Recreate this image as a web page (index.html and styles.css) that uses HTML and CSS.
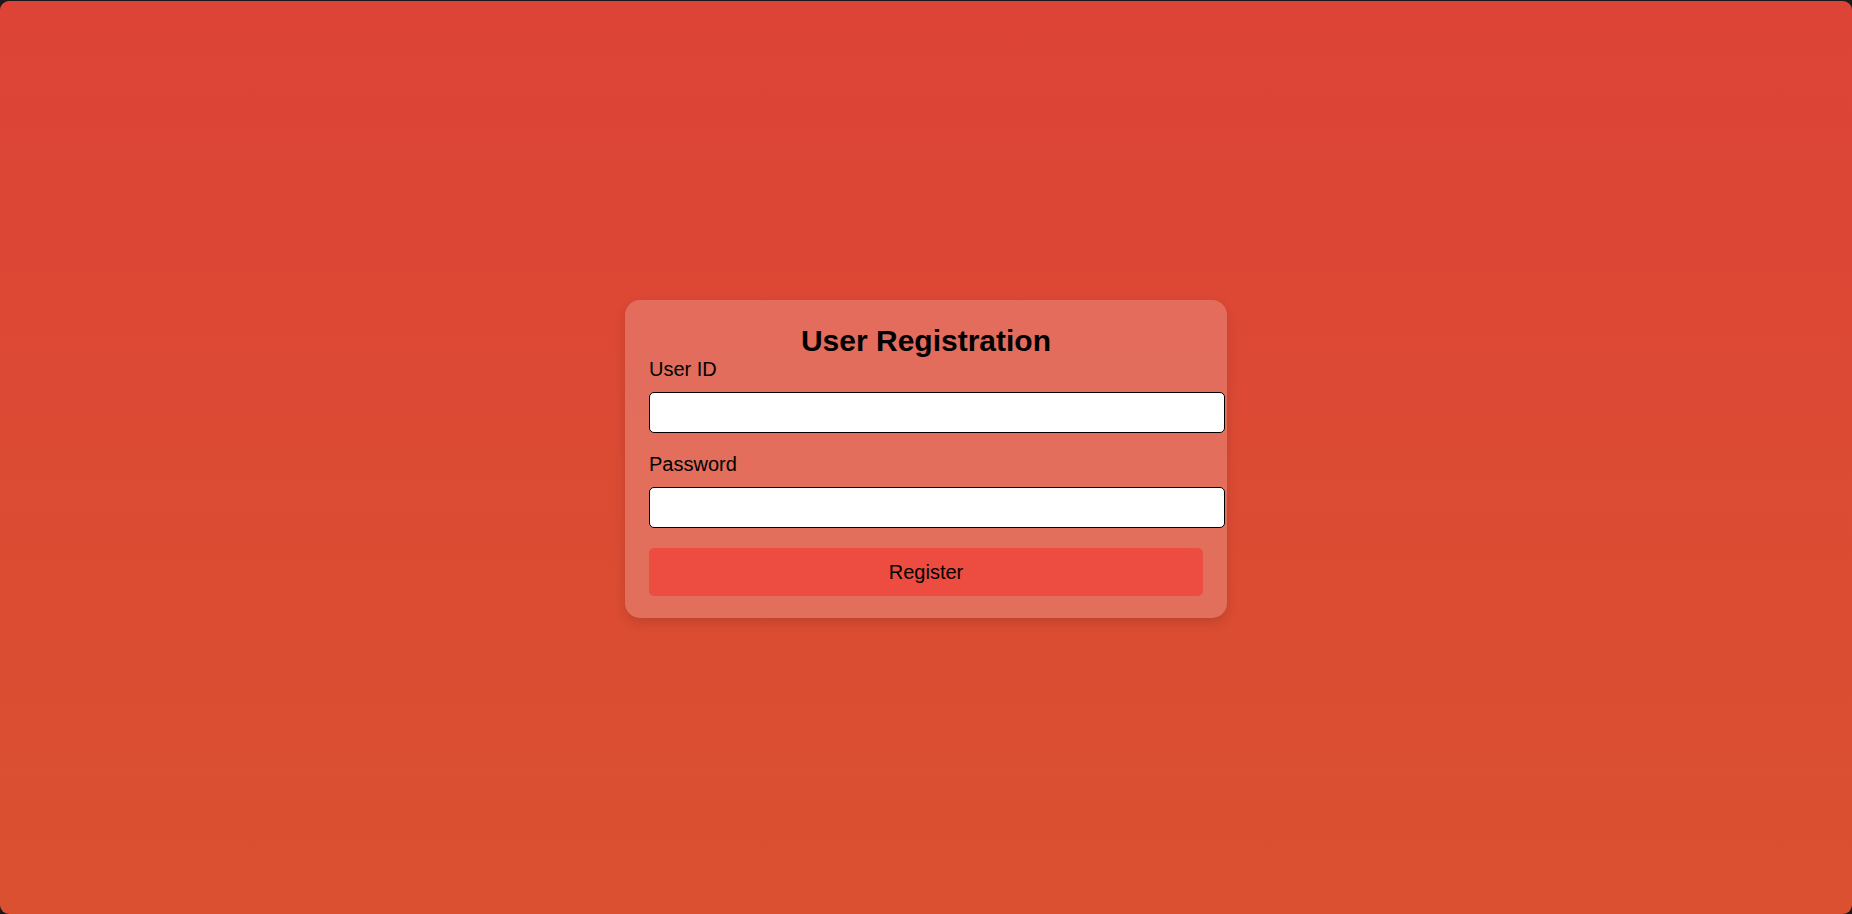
FILE: index.html
```html
<!DOCTYPE html>
<html lang="en">
<head>
<meta charset="utf-8">
<title>User Registration</title>
<link rel="stylesheet" href="styles.css">
</head>
<body>
<div class="screen">
  <form class="card">
    <h2 class="title">User Registration</h2>
    <label class="label" for="uid">User ID</label>
    <input class="field" id="uid" type="text">
    <label class="label" for="pwd">Password</label>
    <input class="field" id="pwd" type="password">
    <button class="btn" type="button">Register</button>
  </form>
</div>
</body>
</html>
```
FILE: styles.css
```css
html {
  background: #1a1a1a;
}
body {
  margin: 0;
  font-family: "Liberation Sans", Arial, sans-serif;
  color: #000;
}
.screen {
  margin-top: 1px;
  height: 913px;
  border-radius: 9px;
  background: linear-gradient(180deg, #dd4437 0%, #da5030 100%);
  display: flex;
  align-items: center;
  justify-content: center;
}
.card {
  width: 554px;
  padding: 24px 24px 22px;
  margin-top: 3px;
  background: rgba(255, 255, 255, 0.2);
  border-radius: 15px;
  box-shadow: 0 5px 12px rgba(0, 0, 0, 0.12);
}
.title {
  margin: 0;
  font-size: 30px;
  font-weight: bold;
  text-align: center;
  line-height: 34px;
}
.label {
  display: block;
  font-size: 20px;
  line-height: 23px;
  margin-bottom: 10.5px;
}
.field {
  display: block;
  width: 100%;
  height: 19.5px;
  padding: 10px;
  margin: 0 0 20px;
  border: 1.25px solid #000;
  border-radius: 5px;
  background: #fff;
  font-family: "Liberation Sans", Arial, sans-serif;
  font-size: 16.67px;
  outline: none;
}
.btn {
  display: block;
  width: 100%;
  height: 48px;
  margin-top: 0;
  border: none;
  border-radius: 5px;
  background: #ed4c40;
  color: #000;
  font-family: "Liberation Sans", Arial, sans-serif;
  font-size: 20px;
  cursor: pointer;
}
```
